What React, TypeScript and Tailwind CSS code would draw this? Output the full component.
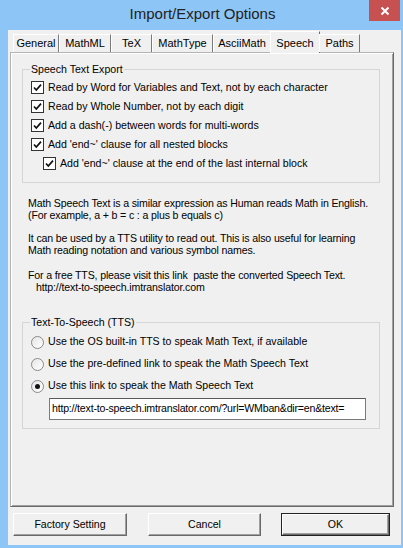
import React from 'react';

const font = { fontFamily: '"Liberation Sans", Arial, sans-serif' };

const tabs = [
  { label: 'General', w: 'w-[46px]' },
  { label: 'MathML', w: 'w-[52px]' },
  { label: 'TeX', w: 'w-[41px]' },
  { label: 'MathType', w: 'w-[61px]' },
  { label: 'AsciiMath', w: 'w-[58px]' },
  { label: 'Speech', w: 'w-[50px]', active: true },
  { label: 'Paths', w: 'w-[41px]' },
];

function Check() {
  return (
    <span className="w-[13px] h-[13px] shrink-0 border border-[#333333] bg-white flex items-center justify-center">
      <svg width="11" height="11" viewBox="0 0 11 11">
        <path d="M2 5.5 L4.3 8 L9 2.6" fill="none" stroke="#111" strokeWidth="1.7" />
      </svg>
    </span>
  );
}

function Radio({ on }: { on?: boolean }) {
  return (
    <span className="w-[13px] h-[13px] shrink-0 rounded-full border border-[#8a8a8a] bg-gradient-to-br from-[#e6e6e6] to-white flex items-center justify-center">
      {on && <span className="w-[5px] h-[5px] rounded-full bg-[#111]" />}
    </span>
  );
}

function Group({ title, className, children }: { title: string; className: string; children: React.ReactNode }) {
  return (
    <div className={`relative border border-[#d5d5d5] ${className}`}>
      <span className="absolute left-[7px] top-[-7px] px-[1px] bg-[#f0f0f0] leading-[13px]">{title}</span>
      {children}
    </div>
  );
}

function Button({ label, w, def }: { label: string; w: string; def?: boolean }) {
  return (
    <div className={`${w} h-[23px] ${def ? 'border border-[#222]' : ''}`}>
      <div className="h-full flex items-center justify-center bg-[#f0f0f0] border border-t-white border-l-white border-r-[#696969] border-b-[#696969] shadow-[inset_-1px_-1px_0_#a0a0a0]">
        {label}
      </div>
    </div>
  );
}

export default function App() {
  const checks = [
    { t: 'Read by Word for Variables and Text, not by each character' },
    { t: 'Read by Whole Number, not by each digit' },
    { t: 'Add a dash(-) between words for multi-words' },
    { t: "Add 'end~' clause for all nested blocks" },
    { t: "Add 'end~' clause at the end of the last internal block", indent: true },
  ];
  return (
    <div className="w-[403px] h-[548px] bg-[#8dc5f6] flex flex-col text-[10.6px] text-black" style={font}>
      <div className="relative h-[30px] shrink-0 flex justify-center">
        <span className="text-[15px] leading-[27px] text-[#222] pl-[2px]">Import/Export Options</span>
        <div className="absolute right-[3px] top-0 w-[31px] h-[21px] bg-[#c75050] flex items-center justify-center">
          <svg width="10" height="10" viewBox="0 0 10 10">
            <path d="M1.5 1.5 L8.5 8.5 M8.5 1.5 L1.5 8.5" stroke="white" strokeWidth="2" />
          </svg>
        </div>
      </div>
      <div className="flex-1 ml-[8px] mr-[2px] mb-[3px] bg-[#f0f0f0] flex flex-col">
        <div className="flex items-end h-[23px] pl-[5px] -mb-px relative z-10">
          {tabs.map((t) =>
            t.active ? (
              <div
                key={t.label}
                className={`${t.w} h-[22px] -ml-[1px] -mr-[1px] flex items-start justify-center pt-[3px] bg-[#f0f0f0] border border-b-0 border-l-white border-t-white border-r-[#696969] text-[11px]`}
              >
                {t.label}
              </div>
            ) : (
              <div
                key={t.label}
                className={`${t.w} h-[18px] mb-[1px] flex items-center justify-center bg-[#f0f0f0] border border-b-0 border-l-white border-t-white border-r-[#7a7a7a] text-[11px]`}
              >
                {t.label}
              </div>
            )
          )}
        </div>
        <div className="ml-[2px] w-[384px] h-[455px] border border-l-[#b4b4b4] border-t-[#b4b4b4] border-r-[#696969] border-b-[#696969] shadow-[inset_1px_1px_0_white,inset_-1px_-1px_0_#a0a0a0] flex flex-col">
          <Group title="Speech Text Export" className="ml-[11px] mt-[16px] w-[358px] h-[114px] pt-[8px] pl-[8px]">
            {checks.map((c) => (
              <div key={c.t} className={`h-[19px] flex items-center gap-[4px] ${c.indent ? 'pl-[12px]' : ''}`}>
                <Check />
                <span className="leading-[13px]">{c.t}</span>
              </div>
            ))}
          </Group>
          <div className="ml-[17px] mt-[14px] leading-[12px] tracking-[-0.15px]">
            <p>Math Speech Text is a similar expression as Human reads Math in English.</p>
            <p>(For example, a + b = c : a plus b equals c)</p>
            <p className="mt-[11px]">It can be used by a TTS utility to read out. This is also useful for learning</p>
            <p>Math reading notation and various symbol names.</p>
            <p className="mt-[13px]">For a free TTS, please visit this link&nbsp; paste the converted Speech Text.</p>
            <p className="pl-[8px]">http://text-to-speech.imtranslator.com</p>
          </div>
          <Group title="Text-To-Speech (TTS)" className="ml-[11px] mt-[29px] w-[358px] h-[107px] pt-[8px] pl-[8px]">
            <div className="h-[22px] flex items-center gap-[4px]">
              <Radio />
              <span>Use the OS built-in TTS to speak Math Text, if available</span>
            </div>
            <div className="h-[22px] flex items-center gap-[4px]">
              <Radio />
              <span>Use the pre-defined link to speak the Math Speech Text</span>
            </div>
            <div className="h-[22px] flex items-center gap-[4px]">
              <Radio on />
              <span>Use this link to speak the Math Speech Text</span>
            </div>
            <div className="ml-[18px] mt-[1px] w-[317px] h-[22px] bg-white border border-[#7a7a7a] border-t-[#5a5a5a] flex items-center pl-[2px] overflow-hidden whitespace-nowrap tracking-[-0.2px]">
              http://text-to-speech.imtranslator.com/?url=WMban&amp;dir=en&amp;text=
            </div>
          </Group>
        </div>
        <div className="flex mt-[6px] ml-[5px]">
          <Button label="Factory Setting" w="w-[114px]" />
          <div className="ml-[21px]">
            <Button label="Cancel" w="w-[113px]" />
          </div>
          <div className="ml-[20px]">
            <Button label="OK" w="w-[109px]" def />
          </div>
        </div>
      </div>
    </div>
  );
}
